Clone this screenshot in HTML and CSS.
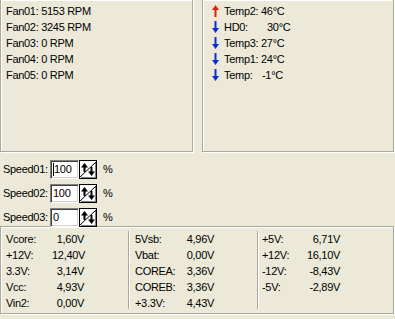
FILE: index.html
```html
<!DOCTYPE html>
<html lang="en">
<head>
  <meta charset="UTF-8">
  <title>Fan Monitor</title>
  <link rel="stylesheet" href="styles.css">
</head>
<body>
  <div class="top">
    <div class="panel fans">
      <div class="line">Fan01: 5153 RPM</div>
      <div class="line">Fan02: 3245 RPM</div>
      <div class="line">Fan03: 0 RPM</div>
      <div class="line">Fan04: 0 RPM</div>
      <div class="line">Fan05: 0 RPM</div>
    </div>
    <div class="panel temps">
      <div class="line"><span class="arrow up"><svg width="7" height="12" viewBox="0 0 7 12"><path d="M3.5 0 L7 5 H4.5 V12 H2.5 V5 H0 Z" fill="#e0200c"/></svg></span><span class="tlabel">Temp2:</span><span>46°C</span></div>
      <div class="line"><span class="arrow"><svg width="7" height="12" viewBox="0 0 7 12"><path d="M3.5 12 L7 7 H4.5 V0 H2.5 V7 H0 Z" fill="#1030d0"/></svg></span><span class="tlabel">HD0:</span><span class="shift">30°C</span></div>
      <div class="line"><span class="arrow"><svg width="7" height="12" viewBox="0 0 7 12"><path d="M3.5 12 L7 7 H4.5 V0 H2.5 V7 H0 Z" fill="#1030d0"/></svg></span><span class="tlabel">Temp3:</span><span>27°C</span></div>
      <div class="line"><span class="arrow"><svg width="7" height="12" viewBox="0 0 7 12"><path d="M3.5 12 L7 7 H4.5 V0 H2.5 V7 H0 Z" fill="#1030d0"/></svg></span><span class="tlabel">Temp1:</span><span>24°C</span></div>
      <div class="line"><span class="arrow"><svg width="7" height="12" viewBox="0 0 7 12"><path d="M3.5 12 L7 7 H4.5 V0 H2.5 V7 H0 Z" fill="#1030d0"/></svg></span><span class="tlabel">Temp:</span><span class="shift-sm">-1°C</span></div>
    </div>
  </div>

  <div class="speeds">
    <div class="speed-row">
      <span class="slabel">Speed01:</span>
      <div class="edit"><span class="caret"></span>100</div>
      <div class="spin"><svg width="16" height="15" viewBox="0 0 16 15"><path d="M0 15 L16 0" stroke="#000" stroke-width="1"/><path d="M4.5 1 L8 5.5 H5.5 V10 H3.5 V5.5 H1 Z" fill="#000"/><path d="M11.5 14 L15 9.5 H12.5 V5 H10.5 V9.5 H8 Z" fill="#000"/></svg></div>
      <span class="pct">%</span>
    </div>
    <div class="speed-row">
      <span class="slabel">Speed02:</span>
      <div class="edit">100</div>
      <div class="spin"><svg width="16" height="15" viewBox="0 0 16 15"><path d="M0 15 L16 0" stroke="#000" stroke-width="1"/><path d="M4.5 1 L8 5.5 H5.5 V10 H3.5 V5.5 H1 Z" fill="#000"/><path d="M11.5 14 L15 9.5 H12.5 V5 H10.5 V9.5 H8 Z" fill="#000"/></svg></div>
      <span class="pct">%</span>
    </div>
    <div class="speed-row">
      <span class="slabel">Speed03:</span>
      <div class="edit">0</div>
      <div class="spin"><svg width="16" height="15" viewBox="0 0 16 15"><path d="M0 15 L16 0" stroke="#000" stroke-width="1"/><path d="M4.5 1 L8 5.5 H5.5 V10 H3.5 V5.5 H1 Z" fill="#000"/><path d="M11.5 14 L15 9.5 H12.5 V5 H10.5 V9.5 H8 Z" fill="#000"/></svg></div>
      <span class="pct">%</span>
    </div>
  </div>

  <div class="panel volts">
    <div class="vcol c1">
      <span>Vcore:</span><span class="val">1,60V</span>
      <span>+12V:</span><span class="val">12,40V</span>
      <span>3.3V:</span><span class="val">3,14V</span>
      <span>Vcc:</span><span class="val">4,93V</span>
      <span>Vin2:</span><span class="val">0,00V</span>
    </div>
    <div class="vsep"></div>
    <div class="vcol c2">
      <span>5Vsb:</span><span class="val">4,96V</span>
      <span>Vbat:</span><span class="val">0,00V</span>
      <span>COREA:</span><span class="val">3,36V</span>
      <span>COREB:</span><span class="val">3,36V</span>
      <span>+3.3V:</span><span class="val">4,43V</span>
    </div>
    <div class="vsep"></div>
    <div class="vcol c3">
      <span>+5V:</span><span class="val">6,71V</span>
      <span>+12V:</span><span class="val">16,10V</span>
      <span>-12V:</span><span class="val">-8,43V</span>
      <span>-5V:</span><span class="val">-2,89V</span>
    </div>
  </div>
</body>
</html>
```

FILE: styles.css
```css
body {
  margin: 0;
  width: 395px;
  height: 319px;
  overflow: hidden;
  background: #ece9d8;
  font-family: "Liberation Sans", Arial, sans-serif;
  font-size: 11px;
  letter-spacing: -0.3px;
  color: #000;
}
.panel {
  box-sizing: border-box;
  border: 1px solid #aca899;
  box-shadow: 1px 1px 0 #fff, inset 1px 1px 0 #fff;
}
.top {
  display: flex;
  gap: 9px;
  margin-top: -1px;
}
.fans {
  width: 193px;
  height: 153px;
  padding: 3px 0 0 5px;
}
.temps {
  width: 192px;
  height: 153px;
  padding: 3px 0 0 9px;
}
.line {
  height: 16px;
  line-height: 16px;
  display: flex;
  align-items: center;
  white-space: nowrap;
}
.arrow {
  width: 7px;
  height: 12px;
  margin-right: 5px;
  display: flex;
}
.tlabel {
  width: 37px;
}
.shift {
  margin-left: 6px;
}
.shift-sm {
  margin-left: 1px;
}
.speeds {
  padding: 5px 0 0 3px;
  height: 69px;
}
.speed-row {
  display: flex;
  align-items: center;
  height: 24px;
}
.slabel {
  width: 47px;
}
.edit {
  box-sizing: border-box;
  width: 29px;
  height: 19px;
  background: #fff;
  border-top: 1px solid #808080;
  border-left: 1px solid #808080;
  border-right: 1px solid #fff;
  border-bottom: 1px solid #fff;
  box-shadow: inset 1px 1px 0 #404040, inset -1px -1px 0 #d4d0c8;
  padding-left: 2px;
  line-height: 17px;
  display: flex;
  align-items: center;
}
.caret {
  width: 1px;
  height: 13px;
  background: #000;
}
.spin {
  box-sizing: border-box;
  width: 18px;
  height: 19px;
  background: #fff;
  border: 1px solid #000;
  box-shadow: inset 1px 1px 0 #fff, inset -1px -1px 0 #808080;
  display: flex;
  align-items: center;
  justify-content: center;
}
.pct {
  margin-left: 6px;
}
.volts {
  width: 394px;
  height: 88px;
  display: flex;
  padding: 4px 0;
}
.vsep {
  width: 1px;
  background: #aca899;
  box-shadow: 1px 0 0 #fff;
}
.vcol {
  display: grid;
  grid-auto-rows: 16px;
  line-height: 16px;
  align-content: start;
  white-space: nowrap;
}
.val {
  text-align: right;
}
.c1 {
  width: 127px;
  padding-left: 5px;
  box-sizing: border-box;
  grid-template-columns: 46px 32px;
}
.c2 {
  width: 128px;
  padding-left: 6px;
  box-sizing: border-box;
  grid-template-columns: 45px 34px;
}
.c3 {
  padding-left: 4px;
  grid-template-columns: 44px 34px;
}
```
